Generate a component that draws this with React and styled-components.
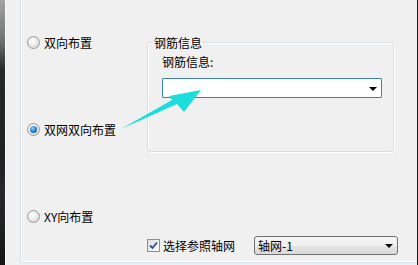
import React from "react";
import styled, { createGlobalStyle } from "styled-components";

const GlobalStyle = createGlobalStyle`
  html, body {
    margin: 0;
    padding: 0;
    background: #f0f0f0;
  }
  body {
    font-family: "Noto Sans CJK SC", "DejaVu Sans", sans-serif;
    font-size: 12px;
    color: #000;
  }
`;

const Page = styled.div`
  position: relative;
  display: flex;
  width: 418px;
  height: 265px;
  overflow: hidden;
  background: #f0f0f0;
`;

const Edge = styled.div`
  width: ${(p) => p.$w}px;
  flex-shrink: 0;
  background: ${(p) => p.$bg};
`;

const Main = styled.div`
  flex: 1;
  display: flex;
  padding: 0 0 2px 14px;
  border-left: 1px solid #fafafa;
`;

const Frame = styled.div`
  flex: 1;
  display: grid;
  grid-template-columns: 126px 1fr;
  border-left: 1px solid #d5dfe5;
  border-bottom: 1px solid #d5dfe5;
  box-shadow: inset 1px -1px 0 #ffffff;
`;

const RadioColumn = styled.div`
  display: flex;
  flex-direction: column;
  gap: 72px;
  padding: 35px 0 0 6px;
`;

const RadioRow = styled.label`
  display: flex;
  align-items: center;
  gap: 4px;
  height: 15px;
  line-height: 15px;
  white-space: nowrap;
`;

const RadioDot = styled.span`
  box-sizing: border-box;
  width: 13px;
  height: 13px;
  border-radius: 50%;
  border: 1px solid #9a9a9a;
  background: radial-gradient(circle at 40% 35%, #ffffff 0%, #e6e6e6 55%, #c8c8c8 100%);
  display: flex;
  align-items: center;
  justify-content: center;
  &::after {
    content: "";
    display: ${(p) => (p.$checked ? "block" : "none")};
    width: 7px;
    height: 7px;
    border-radius: 50%;
    background: radial-gradient(circle at 40% 35%, #8fd3ff 0%, #1e78c8 55%, #0a3f86 100%);
  }
`;

const RightColumn = styled.div`
  display: flex;
  flex-direction: column;
  padding: 35px 0 7px 0;
`;

const Group = styled.fieldset`
  box-sizing: border-box;
  width: 247px;
  height: 117px;
  margin: 0;
  padding: 4px 11px 0 14px;
  border: 1px solid #d5dfe5;
  border-radius: 3px;
  box-shadow: inset 1px 1px 0 #ffffff, 1px 1px 0 #ffffff;
  legend {
    padding: 0 1px;
    margin-left: -9px;
    line-height: 15px;
  }
`;

const FieldLabel = styled.div`
  height: 16px;
  line-height: 16px;
  margin-bottom: 8px;
`;

const Combo = styled.div`
  box-sizing: border-box;
  display: flex;
  align-items: center;
  justify-content: space-between;
  width: ${(p) => p.$w}px;
  height: ${(p) => p.$h}px;
  padding: 0 4px 0 3px;
  border: 1px solid ${(p) => (p.$flat ? "#3c7fb1" : "#707070")};
  border-radius: ${(p) => (p.$flat ? "1px" : "3px")};
  background: ${(p) =>
    p.$flat ? "#ffffff" : "linear-gradient(#f6f6f6 0%, #efefef 50%, #e5e5e5 51%, #d9d9d9 100%)"};
  white-space: nowrap;
`;

const Caret = styled.span`
  width: 0;
  height: 0;
  border-left: 4px solid transparent;
  border-right: 4px solid transparent;
  border-top: 4px solid #000;
  margin-top: 1px;
`;

const BottomRow = styled.div`
  margin-top: auto;
  display: flex;
  align-items: center;
`;

const CheckRow = styled.label`
  display: flex;
  align-items: center;
  gap: 3px;
  width: 107px;
  white-space: nowrap;
`;

const CheckBox = styled.span`
  box-sizing: border-box;
  width: 13px;
  height: 13px;
  border: 1px solid #8e8f8f;
  background: linear-gradient(135deg, #dcdcdc, #ffffff);
  display: flex;
  align-items: center;
  justify-content: center;
  svg {
    display: block;
  }
`;

const Arrow = styled.svg`
  position: absolute;
  left: 0;
  top: 0;
  pointer-events: none;
`;

function Radio({ checked, children }) {
  return (
    <RadioRow>
      <RadioDot $checked={checked} />
      <span>{children}</span>
    </RadioRow>
  );
}

export default function App() {
  return (
    <>
      <GlobalStyle />
      <Page>
        <Edge $w={5} $bg="linear-gradient(#a3a3a3 0px, #6f7373 40px, #262a2a 70px, #1f2222 160px, #2b2630 190px, #1d221f 230px, #141414 265px)" />
        <Main>
          <Frame>
            <RadioColumn>
              <Radio>双向布置</Radio>
              <Radio checked>双网双向布置</Radio>
              <Radio>XY向布置</Radio>
            </RadioColumn>
            <RightColumn>
              <Group>
                <legend>钢筋信息</legend>
                <FieldLabel>钢筋信息:</FieldLabel>
                <Combo $flat $w={220} $h={20}>
                  <span />
                  <Caret />
                </Combo>
              </Group>
              <BottomRow>
                <CheckRow>
                  <CheckBox>
                    <svg width="9" height="9" viewBox="0 0 9 9">
                      <path d="M1 4.5 L3.5 7 L8 1.5" fill="none" stroke="#2c4f8f" strokeWidth="1.8" />
                    </svg>
                  </CheckBox>
                  <span>选择参照轴网</span>
                </CheckRow>
                <Combo $w={144} $h={19}>
                  <span>轴网-1</span>
                  <Caret />
                </Combo>
              </BottomRow>
            </RightColumn>
          </Frame>
        </Main>
        <Edge $w={1} $bg="#1a1a1a" />
        <Arrow width="418" height="265" viewBox="0 0 418 265">
          <polygon
            points="121,129 172,100 169,96 201,90 184,112 177,104"
            fill="#1cdcdc"
          />
        </Arrow>
      </Page>
    </>
  );
}
